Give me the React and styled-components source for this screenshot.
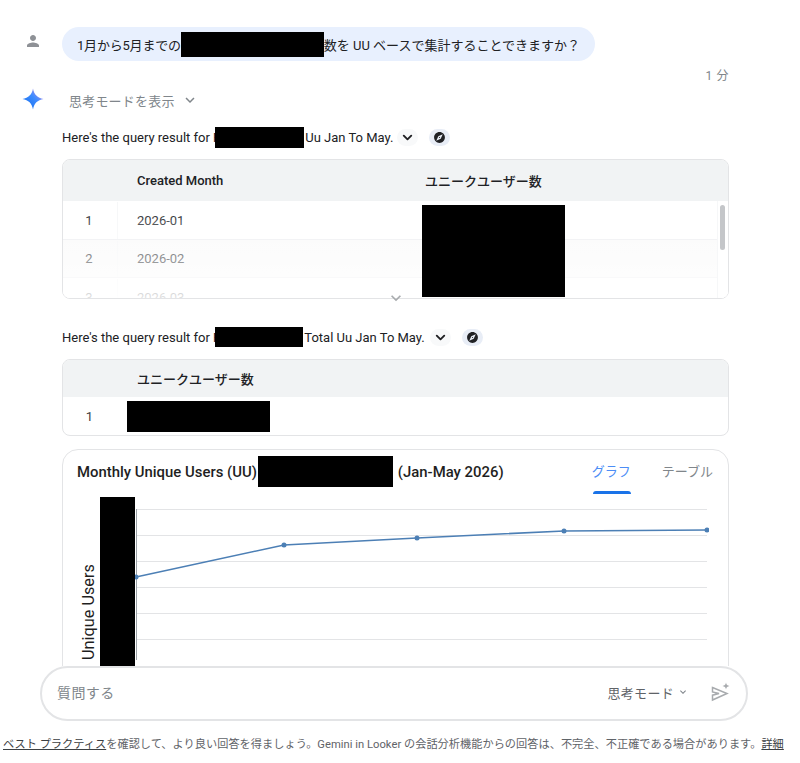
import styled, { createGlobalStyle } from "styled-components"
import { MdPerson, MdExplore, MdExpandMore } from "react-icons/md"
import { ChevronDown } from "lucide-react"

const FONT = `Roboto, "Noto Sans CJK JP", sans-serif`

const GlobalStyle = createGlobalStyle`
    html, body {
        margin: 0;
        padding: 0;
        background: #ffffff;
        font-family: ${FONT};
        color: #1f1f1f;
    }
`

function GeminiStar() {
    return (
        <svg width="24" height="24" viewBox="0 0 24 24">
            <defs>
                <linearGradient id="star" x1="0.2" y1="0.9" x2="0.9" y2="0.2">
                    <stop offset="0" stopColor="#1a73f0" />
                    <stop offset="0.6" stopColor="#3f8cff" />
                    <stop offset="1" stopColor="#b08ae8" />
                </linearGradient>
            </defs>
            <path d="M12 1.5C12.9 7.4 16.6 11.1 22.5 12C16.6 12.9 12.9 16.6 12 22.5C11.1 16.6 7.4 12.9 1.5 12C7.4 11.1 11.1 7.4 12 1.5Z" fill="url(#star)" />
        </svg>
    )
}

function SendSpark() {
    return (
        <svg width="22" height="22" viewBox="0 0 22 22" fill="none">
            <path d="M2.5 6.5L17 12.5L2.5 19V14.2L9 12.5L2.5 11Z" stroke="#a8abae" strokeWidth="1.5" strokeLinejoin="miter" />
            <path d="M16 1.5C16.4 3.6 17.4 4.6 19.5 5C17.4 5.4 16.4 6.4 16 8.5C15.6 6.4 14.6 5.4 12.5 5C14.6 4.6 15.6 3.6 16 1.5Z" fill="#a8abae" />
        </svg>
    )
}

function LineChart() {
    const grid = [0, 26, 52, 78, 104, 130]
    const points = [[1, 68], [149, 36], [282, 29], [429, 22], [572, 21]]
    return (
        <svg width="574" height="157" viewBox="0 0 574 157">
            {grid.map((y) => (
                <line key={y} x1="1" x2="572" y1={y + 0.5} y2={y + 0.5} stroke="#e3e4e6" strokeWidth="1" />
            ))}
            <line x1="1.5" x2="1.5" y1="0" y2="151" stroke="#9aa0a6" strokeWidth="1" />
            <polyline points={points.map((p) => p.join(",")).join(" ")} fill="none" stroke="#4c7fb5" strokeWidth="1.6" />
            {points.map((p) => (
                <circle key={p[0]} cx={p[0]} cy={p[1]} r="2.5" fill="#4c7fb5" />
            ))}
        </svg>
    )
}

function ResultLine({ redactWidth, redactHeight, label, chevronGap }) {
    return (
        <ResultRow>
            <span>Here's the query result for F</span>
            <RowRedact $w={redactWidth} $h={redactHeight} />
            <ResultName>{label}</ResultName>
            <PillButton $gap={chevronGap}><ChevronDown size={15} strokeWidth={3} /></PillButton>
            <PillButton $gap={11} $active><MdExplore /></PillButton>
        </ResultRow>
    )
}

export default function App() {
    return (
        <Page>
            <GlobalStyle />
            <Conversation>
                <UserTurn>
                    <AvatarSlot><MdPerson /></AvatarSlot>
                    <Bubble>
                        <BubbleLead>1月から5月までの</BubbleLead>
                        <Redact $w={143} $h={25} />
                        <span>数を UU ベースで集計することできますか？</span>
                    </Bubble>
                </UserTurn>
                <Elapsed>1 分</Elapsed>
                <ThinkingRow>
                    <StarSlot><GeminiStar /></StarSlot>
                    <ThinkingToggle>思考モードを表示<MdExpandMore /></ThinkingToggle>
                </ThinkingRow>

                <Answer>
                    <ResultLine redactWidth={89} redactHeight={21} label="Uu Jan To May." chevronGap={3} />
                    <TableCard $height={140}>
                        <HeadRow>
                            <span />
                            <HeadCell>Created Month</HeadCell>
                            <HeadCell>ユニークユーザー数</HeadCell>
                        </HeadRow>
                        <BodyRow>
                            <IndexCell>1</IndexCell>
                            <BodyCell>2026-01</BodyCell>
                        </BodyRow>
                        <BodyRow $striped>
                            <IndexCell>2</IndexCell>
                            <BodyCell>2026-02</BodyCell>
                        </BodyRow>
                        <BodyRow>
                            <IndexCell>3</IndexCell>
                            <BodyCell>2026-03</BodyCell>
                        </BodyRow>
                        <Fade />
                        <ScrollTrack><ScrollThumb /></ScrollTrack>
                        <CoverBlock />
                    </TableCard>
                    <MoreChevron><MdExpandMore /></MoreChevron>

                    <ResultLine redactWidth={88} redactHeight={20} label="Total Uu Jan To May." chevronGap={5} />
                    <TableCard $height={77}>
                        <HeadRow $small>
                            <span />
                            <HeadCell>ユニークユーザー数</HeadCell>
                        </HeadRow>
                        <TotalRow>
                            <IndexCell>1</IndexCell>
                            <Redact $w={143} $h={31} />
                        </TotalRow>
                    </TableCard>

                    <ChartCard>
                        <ChartHead>
                            <ChartTitle>
                                <span>Monthly Unique Users (UU)</span>
                                <Redact $w={135} $h={31} />
                                <span>(Jan-May 2026)</span>
                            </ChartTitle>
                            <Tabs>
                                <Tab $active>グラフ</Tab>
                                <Tab>テーブル</Tab>
                            </Tabs>
                        </ChartHead>
                        <ChartBody>
                            <AxisLabel>Unique Users</AxisLabel>
                            <AxisCover />
                            <PlotArea><LineChart /></PlotArea>
                        </ChartBody>
                    </ChartCard>
                </Answer>
            </Conversation>

            <Composer>
                <Placeholder>質問する</Placeholder>
                <ModeSelect>思考モード<MdExpandMore /></ModeSelect>
                <SendButton><SendSpark /></SendButton>
            </Composer>

            <Disclaimer>
                <a>ベスト プラクティス</a>を確認して、より良い回答を得ましょう。Gemini in Looker の会話分析機能からの回答は、不完全、不正確である場合があります。<a>詳細</a>
            </Disclaimer>
        </Page>
    )
}

const Page = styled.div`
    width: 800px;
    height: 763px;
    overflow: hidden;
    display: flex;
    flex-direction: column;
    background: #ffffff;
`

const Conversation = styled.div`
    flex: none;
    height: 639px;
    padding: 27px 71px 0 0;
    overflow: hidden;
`

const UserTurn = styled.div`
    display: flex;
    align-items: center;
`

const AvatarSlot = styled.div`
    width: 62px;
    display: flex;
    justify-content: center;
    padding-left: 4px;
    box-sizing: border-box;
    margin-top: -6px;
    font-size: 18px;
    color: #8e9196;
    svg {
        display: block;
    }
`

const Bubble = styled.div`
    height: 34px;
    padding: 0 15px;
    display: flex;
    align-items: center;
    border-radius: 17px;
    background: #e8f0fe;
    font-size: 13px;
    color: #202124;
    white-space: nowrap;
`

const BubbleLead = styled.span`
    letter-spacing: -0.2px;
`

const Redact = styled.span`
    display: block;
    flex: none;
    width: ${(p) => p.$w}px;
    height: ${(p) => p.$h}px;
    background: #000000;
`

const RowRedact = styled(Redact)`
    margin-left: -5px;
`

const Elapsed = styled.div`
    margin-top: 7px;
    height: 16px;
    line-height: 16px;
    text-align: right;
    font-size: 12px;
    letter-spacing: 0.6px;
    color: #80868b;
`

const ThinkingRow = styled.div`
    display: flex;
    align-items: center;
    margin-top: 4px;
    height: 24px;
`

const StarSlot = styled.div`
    width: 62px;
    display: flex;
    justify-content: center;
    padding-left: 4px;
    margin-bottom: 2px;
    box-sizing: border-box;
    svg {
        display: block;
    }
`

const ThinkingToggle = styled.div`
    display: flex;
    align-items: center;
    gap: 6px;
    margin-left: 7px;
    font-size: 13px;
    letter-spacing: 0.2px;
    color: #80868b;
    svg {
        font-size: 18px;
    }
`

const Answer = styled.div`
    margin-left: 62px;
`

const ResultRow = styled.div`
    display: flex;
    align-items: center;
    height: 24px;
    margin-top: 13px;
    font-size: 13px;
    color: #202124;
    white-space: nowrap;
`

const ResultName = styled.span`
    margin-left: 1px;
`

const PillButton = styled.span`
    display: flex;
    align-items: center;
    justify-content: center;
    width: 21px;
    height: 17px;
    margin-left: ${(p) => p.$gap}px;
    border-radius: 9px;
    background: ${(p) => (p.$active ? "#e8edf6" : "#f8f9fa")};
    color: #202124;
    font-size: 13px;
    svg {
        display: block;
    }
`

const TableCard = styled.div`
    position: relative;
    box-sizing: border-box;
    height: ${(p) => p.$height}px;
    margin-top: 10px;
    border: 1px solid #e3e4e6;
    border-radius: 8px;
    overflow: hidden;
    background: #ffffff;
`

const HeadRow = styled.div`
    display: grid;
    grid-template-columns: 55px 288px 1fr;
    align-items: center;
    height: ${(p) => (p.$small ? 37 : 41)}px;
    background: #f1f3f4;
`

const HeadCell = styled.div`
    padding-left: 19px;
    font-size: 13px;
    font-weight: 500;
    color: #202124;
    white-space: nowrap;
`

const BodyRow = styled.div`
    display: grid;
    grid-template-columns: 55px 288px 1fr;
    align-items: center;
    height: 38.5px;
    padding-top: 1px;
    border-bottom: 1px solid #eeeff1;
    box-sizing: border-box;
    background: ${(p) => (p.$striped ? "#fafafa" : "#ffffff")};
    > div:first-child {
        border-right: 1px solid #f6f7f8;
    }
`

const TotalRow = styled.div`
    display: flex;
    align-items: center;
    height: 38px;
    gap: 9px;
`

const IndexCell = styled.div`
    width: 55px;
    height: 100%;
    display: flex;
    align-items: center;
    justify-content: center;
    box-sizing: border-box;
    padding-right: 2px;
    font-size: 13px;
    color: #3c4043;
`

const BodyCell = styled.div`
    padding-left: 19px;
    font-size: 13px;
    color: #3c4043;
`

const Fade = styled.div`
    position: absolute;
    left: 0;
    right: 0;
    bottom: 0;
    height: 78px;
    background: linear-gradient(rgba(255, 255, 255, 0.1), rgba(255, 255, 255, 0.4) 45%, rgba(255, 255, 255, 0.85));
`

const ScrollTrack = styled.div`
    position: absolute;
    top: 41px;
    right: 0;
    bottom: 0;
    width: 10px;
    background: #ffffff;
    border-left: 1px solid #f6f7f8;
`

const ScrollThumb = styled.div`
    width: 5px;
    height: 45px;
    margin: 4px 0 0 2px;
    border-radius: 3px;
    background: #c4c6c9;
`

const CoverBlock = styled.div`
    position: absolute;
    left: 359px;
    top: 45px;
    width: 143px;
    height: 92px;
    background: #000000;
`

const MoreChevron = styled.div`
    position: relative;
    z-index: 1;
    display: flex;
    justify-content: center;
    height: 13px;
    font-size: 20px;
    color: #a8abae;
    svg {
        display: block;
        margin-top: -11px;
    }
`

const ChartCard = styled.div`
    box-sizing: border-box;
    height: 260px;
    margin-top: 13px;
    padding: 6px 15px 0 14px;
    border: 1px solid #e3e4e6;
    border-radius: 16px;
`

const ChartHead = styled.div`
    display: flex;
    justify-content: space-between;
    height: 41px;
`

const ChartTitle = styled.div`
    display: flex;
    align-items: center;
    gap: 1px;
    height: 31px;
    font-size: 14.9px;
    font-weight: 500;
    color: #1f1f1f;
    white-space: nowrap;
    span:last-child {
        margin-left: 4px;
    }
`

const Tabs = styled.div`
    display: flex;
    gap: 31px;
`

const Tab = styled.div`
    position: relative;
    height: 38px;
    line-height: 32px;
    font-size: 13px;
    color: ${(p) => (p.$active ? "#4c8df6" : "#80868b")};
    &::after {
        content: "";
        display: ${(p) => (p.$active ? "block" : "none")};
        position: absolute;
        left: 1px;
        right: 0;
        bottom: 0;
        height: 3px;
        border-radius: 3px 3px 0 0;
        background: #1a73e8;
    }
`

const ChartBody = styled.div`
    position: relative;
    display: flex;
    height: 170px;
`

const AxisLabel = styled.div`
    flex: none;
    width: 23px;
    height: 163px;
    writing-mode: vertical-rl;
    transform: rotate(180deg);
    font-size: 16.3px;
    font-weight: 400;
    line-height: 23px;
    text-align: left;
    color: #1f1f1f;
    white-space: nowrap;
`

const AxisCover = styled.div`
    flex: none;
    width: 35px;
    height: 169px;
    background: #000000;
`

const PlotArea = styled.div`
    flex: none;
    padding-top: 12px;
    svg {
        display: block;
    }
`

const Composer = styled.div`
    flex: none;
    box-sizing: border-box;
    width: 708px;
    height: 55px;
    margin-left: 40px;
    padding: 0 14px 3px 15px;
    display: flex;
    align-items: center;
    border: 2px solid #e3e4e6;
    border-radius: 28px;
    background: #ffffff;
`

const Placeholder = styled.div`
    flex: 1;
    font-size: 14px;
    letter-spacing: 0.4px;
    color: #80868b;
`

const ModeSelect = styled.div`
    display: flex;
    align-items: center;
    gap: 3px;
    font-size: 13px;
    letter-spacing: 0.3px;
    color: #5f6368;
    svg {
        font-size: 12px;
        color: #80868b;
    }
`

const SendButton = styled.div`
    margin-left: 21px;
    svg {
        display: block;
    }
`

const Disclaimer = styled.div`
    margin: 16px 0 0 3px;
    font-size: 11.2px;
    letter-spacing: 0.02px;
    line-height: 16px;
    color: #5f6368;
    white-space: nowrap;
    a {
        color: #3c4043;
        text-decoration: underline;
    }
`
